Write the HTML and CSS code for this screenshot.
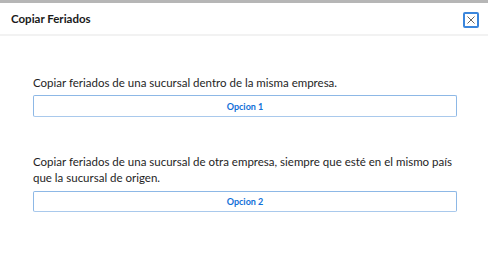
FILE: index.html
```html
<!DOCTYPE html>
<html lang="es">
<head>
<meta charset="utf-8">
<title>Copiar Feriados</title>
<link rel="stylesheet" href="styles.css">
</head>
<body>
<div class="topbar"></div>
<div class="dialog">
  <header class="header">
    <h1 class="title">Copiar Feriados</h1>
    <button class="close" aria-label="Cerrar">
      <svg width="8" height="8" viewBox="0 0 8 8"><path d="M0.5 0.5 L7.5 7.5 M7.5 0.5 L0.5 7.5" stroke="#666" stroke-width="1" fill="none"/></svg>
    </button>
  </header>
  <main class="content">
    <section class="option first">
      <p class="desc">Copiar feriados de una sucursal dentro de la misma empresa.</p>
      <button class="opt-btn">Opcion 1</button>
    </section>
    <section class="option second">
      <p class="desc">Copiar feriados de una sucursal de otra empresa, siempre que esté en el mismo país que la sucursal de origen.</p>
      <button class="opt-btn">Opcion 2</button>
    </section>
  </main>
</div>
</body>
</html>
```
FILE: styles.css
```css
html, body {
  margin: 0;
  padding: 0;
  background: #fff;
}
body {
  font-family: "Lato", "Noto Sans", sans-serif;
  color: #222;
  width: 488px;
  height: 253px;
  overflow: hidden;
}
.topbar {
  height: 3px;
  background: #b6b6b6;
}
.header {
  height: 31px;
  display: flex;
  align-items: center;
  justify-content: space-between;
  padding: 0 9px 0 11px;
  border-bottom: 2px solid #f2f2f2;
}
.title {
  margin: 0;
  font-size: 11.5px;
  font-weight: 700;
  color: #1a1a1a;
}
.close {
  width: 16px;
  height: 16px;
  box-sizing: border-box;
  border: 2px solid #3b86dc;
  border-radius: 2px;
  background: #fff;
  padding: 0;
  display: flex;
  align-items: center;
  justify-content: center;
  margin-top: 3px;
}
.content {
  padding: 0 31px 0 33px;
}
.option {
  display: flex;
  flex-direction: column;
}
.first {
  padding-top: 38px;
}
.second {
  padding-top: 37px;
}
.desc {
  margin: 0 0 4px 0;
  font-size: 11.5px;
  line-height: 17px;
  color: #1e1e1e;
}
.second .desc {
  line-height: 16px;
  margin-bottom: 5px;
}
.opt-btn {
  height: 22px;
  box-sizing: border-box;
  border: 1px solid #8db8e6;
  border-bottom-color: #a9c9ec;
  border-radius: 2px;
  background: #fff;
  font-family: "Lato", "Noto Sans", sans-serif;
  font-size: 9px;
  font-weight: 700;
  color: #1170d8;
  padding: 0;
}
.second .opt-btn {
  height: 21px;
}
```
